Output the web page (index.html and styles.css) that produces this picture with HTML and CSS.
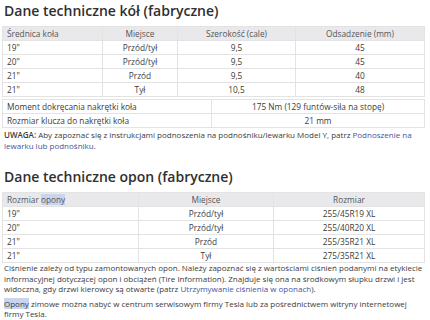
FILE: index.html
```html
<!DOCTYPE html>
<html lang="pl">

<head>
    <meta charset="UTF-8">
    <title>Dane techniczne kół i opon</title>
    <link rel="stylesheet" href="styles.css">
</head>

<body>
    <div class="page">
        <h2 class="title">Dane techniczne kół (fabryczne)</h2>
        <table class="spec wheels">
            <colgroup>
                <col style="width: 100px">
                <col style="width: 75px">
                <col style="width: 118px">
                <col>
            </colgroup>
            <thead>
                <tr>
                    <th class="left">Średnica koła</th>
                    <th>Miejsce</th>
                    <th>Szerokość (cale)</th>
                    <th>Odsadzenie (mm)</th>
                </tr>
            </thead>
            <tbody>
                <tr><td class="left">19"</td><td>Przód/tył</td><td>9,5</td><td>45</td></tr>
                <tr><td class="left">20"</td><td>Przód/tył</td><td>9,5</td><td>45</td></tr>
                <tr><td class="left">21"</td><td>Przód</td><td>9,5</td><td>40</td></tr>
                <tr><td class="left">21"</td><td>Tył</td><td>10,5</td><td>48</td></tr>
            </tbody>
        </table>

        <table class="spec torque">
            <colgroup>
                <col style="width: 209px">
                <col>
            </colgroup>
            <tbody>
                <tr><td class="left">Moment dokręcania nakrętki koła</td><td>175 Nm (129 funtów-siła na stopę)</td></tr>
                <tr><td class="left">Rozmiar klucza do nakrętki koła</td><td>21 mm</td></tr>
            </tbody>
        </table>

        <p class="note"><b>UWAGA:</b> Aby zapoznać się z instrukcjami podnoszenia na podnośniku/lewarku Model Y, patrz <a href="#">Podnoszenie na lewarku lub podnośniku</a>.</p>

        <h2 class="title second">Dane techniczne opon (fabryczne)</h2>
        <table class="spec tires">
            <colgroup>
                <col style="width: 136px">
                <col style="width: 135px">
                <col>
            </colgroup>
            <thead>
                <tr>
                    <th class="left">Rozmiar <span class="hit">opony</span></th>
                    <th>Miejsce</th>
                    <th>Rozmiar</th>
                </tr>
            </thead>
            <tbody>
                <tr><td class="left">19"</td><td>Przód/tył</td><td>255/45R19 XL</td></tr>
                <tr><td class="left">20"</td><td>Przód/tył</td><td>255/40R20 XL</td></tr>
                <tr><td class="left">21"</td><td>Przód</td><td>255/35R21 XL</td></tr>
                <tr><td class="left">21"</td><td>Tył</td><td>275/35R21 XL</td></tr>
            </tbody>
        </table>

        <p class="note">Ciśnienie zależy od typu zamontowanych opon. Należy zapoznać się z wartościami ciśnień podanymi na etykiecie informacyjnej dotyczącej opon i obciążeń (Tire Information). Znajduje się ona na środkowym słupku drzwi i jest widoczna, gdy drzwi kierowcy są otwarte (patrz <a href="#">Utrzymywanie ciśnienia w oponach</a>).</p>
        <p class="note"><span class="hit">Opony</span> zimowe można nabyć w centrum serwisowym firmy Tesla lub za pośrednictwem witryny internetowej firmy Tesla.</p>
    </div>
</body>

</html>
```

FILE: styles.css
```css
body {
    margin: 0;
    padding: 0;
    background: white;
    font-family: "Open Sans", "Noto Sans", sans-serif;
    color: #3b3b3b;
}

.page {
    padding: 2px 5px 0 2px;
}

.title {
    margin: 0 0 6px 2px;
    font-size: 14px;
    font-weight: 600;
    line-height: 18px;
    color: #2f2f2f;
}

.title.second {
    margin-top: 17px;
    margin-bottom: 6px;
}

/* tabele danych */
.spec {
    width: 423px;
    border-collapse: collapse;
    table-layout: fixed;
    font-size: 8.3px;
    margin-bottom: 2px;
}

.spec.tires {
    margin-bottom: 0;
}

.spec th,
.spec td {
    height: 13px;
    padding: 0 4px;
    border: 1px solid #e3e3e3;
    text-align: center;
    font-weight: normal;
    white-space: nowrap;
}

.spec th {
    background-color: #e9e9ec;
    color: #555;
    height: 13px;
}

.spec .left {
    text-align: left;
}

.note {
    margin: 0 0 3px 2px;
    font-size: 8px;
    line-height: 10.5px;
}

.tires + .note {
    margin-top: 0;
    margin-bottom: 4px;
}

.note b {
    font-weight: 600;
}

.note a {
    color: #3d55a0;
    text-decoration: none;
}

/* podświetlenie wyszukiwania */
.hit {
    background-color: #c9d5ef;
}
```
